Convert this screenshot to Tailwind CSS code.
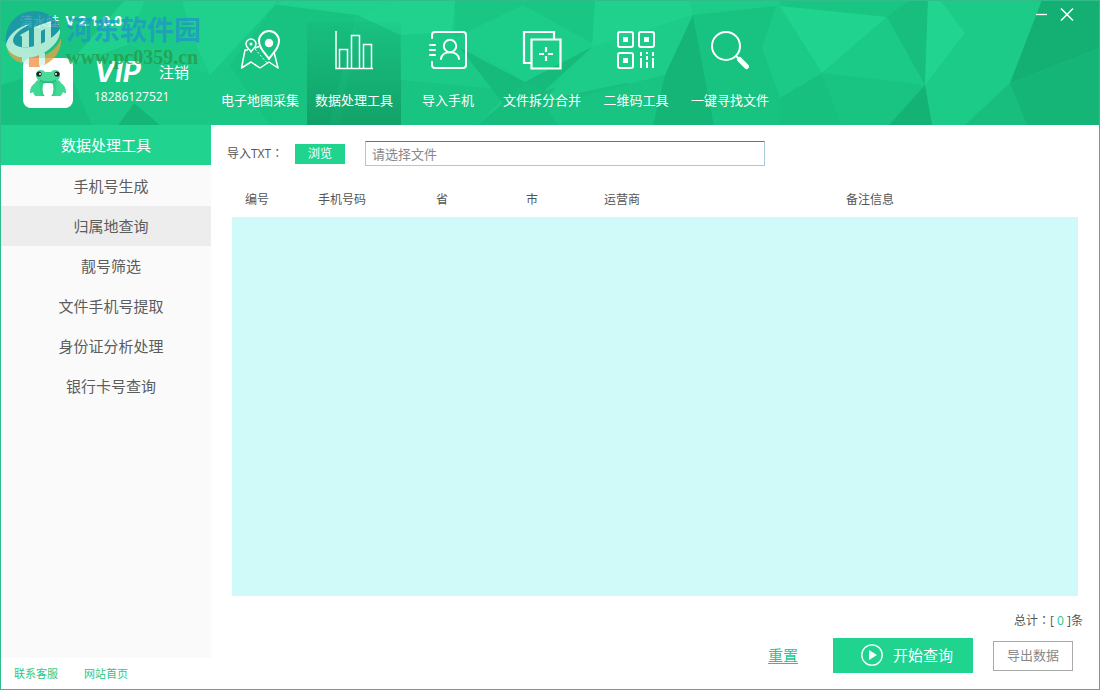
<!DOCTYPE html>
<html lang="zh-CN">
<head>
<meta charset="utf-8">
<meta name="viewport" content="width=device-width, initial-scale=1">
<title>清水蛙 V 2.1.0.0</title>
<script src="https://cdn.jsdelivr.net/npm/@tailwindcss/browser@4"></script>
</head>
<body class="bg-white font-['Open_Sans','Noto_Sans_CJK_SC',sans-serif] text-xs text-[#555]">
<div class="flex min-h-screen flex-col border border-[#2fbd8c]">

  <header class="relative isolate flex h-31 bg-[#1bcb87] text-white">
    <!-- low-poly backdrop -->
    <svg class="absolute inset-0 -z-10 size-full" viewBox="1 1 1098 124" preserveAspectRatio="none" aria-hidden="true">
      <path fill="#19c482" d="M0 0h125l-58 66L0 40z"/>
      <path fill="#20d18e" d="M125 0h20L128 45 67 66z"/>
      <path fill="#1cca87" d="M145 0h65v55L128 45z"/>
      <path fill="#20d18e" d="M182 0h93v5l-45 60-20 10-18-40z"/>
      <path fill="#18c07f" d="M0 85l67-19 25 59H0z"/>
      <path fill="#15b577" d="M118 125l16-22 26 22z"/>
      <path fill="#1ac785" d="M67 66l61-21 82 30 20 50H160l-26-22-16 22H92z"/>
      <path fill="#18c281" d="M275 5l82 10-28 110H224l6-60z"/>
      <path fill="#1ac785" d="M275 5l-45 60 40 60h-50l-10-50z"/>
      <path fill="#20d18e" d="M275 4l10-4h115l-43 15z"/>
      <path fill="#21d28f" d="M357 15l43-15h55l-3 32-52 3z"/>
      <path fill="#1ac583" d="M357 15l43 20v90h-60z"/>
      <path fill="#1bca87" d="M400 35l52-3 8 16 50 42-32 35h-78z"/>
      <path fill="#19c382" d="M400 80l110 10-32 35h-78z"/>
      <path fill="#1ac684" d="M455 0h140v45L523 5l-68 33z"/>
      <path fill="#1ccd89" d="M455 38l68-33 72 40-70 37z"/>
      <path fill="#16ba7b" d="M460 48l65 34 67-35-47 43-32 17-10-4z"/>
      <path fill="#17bd7d" d="M503 103l22-21 20 8 35 35H478z"/>
      <path fill="#18bf7f" d="M545 90l35 35h73l-30-50z"/>
      <path fill="#1ccc88" d="M592 47l101-32-28 60-120 25z"/>
      <path fill="#20d18e" d="M595 0h94l4 15-101 32z"/>
      <path fill="#19c382" d="M545 106l120-31-12 50h-95z"/>
      <path fill="#15b578" d="M693 15l21 110h-61l12-50z"/>
      <path fill="#18c281" d="M693 15l83-9 46 67-42 25v27h-66z"/>
      <path fill="#1dcc89" d="M689 0h91l-4 6-83 9z"/>
      <path fill="#1bca86" d="M776 6l46 67-42 25-18-50z"/>
      <path fill="#19c583" d="M780 0h130l-23 17L780 6z"/>
      <path fill="#20d38f" d="M780 6l107 11-65 56z"/>
      <path fill="#1bca86" d="M887 17l38 68-103-12z"/>
      <path fill="#17be7e" d="M887 17l23-17h18l-3 85z"/>
      <path fill="#21d490" d="M928 0h12l25 33-40 52z"/>
      <path fill="#18c07f" d="M822 73l-42 25v27h62z"/>
      <path fill="#19c482" d="M822 73l103 12-36 40h-47z"/>
      <path fill="#14b375" d="M925 85l-36 40h43z"/>
      <path fill="#17be7e" d="M1010 83l-45 42h62z"/>
      <path fill="#14b073" d="M1042 0h58v48l-90 35z"/>
      <path fill="#15b577" d="M1010 83l90-35v77h-73z"/>
    </svg>

    <div class="flex w-[212px] shrink-0 flex-col pt-2.5">
      <p class="pl-[19px] text-[13px] leading-5">清水蛙&ensp;<b class="text-sm leading-5">V 2.1.0.0</b></p>
      <div class="mt-[27px] flex pl-[22px]">
        <svg class="size-[50px] shrink-0" viewBox="0 0 50 50" role="img" aria-label="用户头像">
          <rect width="50" height="50" rx="8" fill="#fff"/>
          <path fill="#3fd894" d="M16 22c-2 0-3 1-4 3-3 2-5 5-5 9 0 2 2 1 3 0 1 2 1 4 4 4h7V25zM34 22c2 0 3 1 4 3 3 2 5 5 5 9 0 2-2 1-3 0-1 2-1 4-4 4h-7V25z"/>
          <path fill="#4adb9a" d="M13 17c0-6 7-6 9-3h6c2-3 9-3 9 3 0 5-4 7-8 7h-8c-4 0-8-2-8-7z"/>
          <path fill="#35cf8a" d="M16 23h18l-2 15H18z"/>
          <path fill="#fff" d="M20 27c0-3 10-3 10 0 1 5 0 10-2 11h-6c-2-1-3-6-2-11z"/>
          <path fill="none" stroke="#21a970" d="M17 22c4 3 12 3 16 0"/>
          <circle cx="16" cy="16" r="2.600" fill="#222"/><circle cx="34" cy="16" r="2.600" fill="#222"/>
          <circle cx="17" cy="16" r="1" fill="#fff"/><circle cx="33" cy="16" r="1" fill="#fff"/>
        </svg>
        <div class="pl-[21px]">
          <div class="flex items-center">
            <strong class="w-[65px] font-['Inter','Open_Sans',sans-serif] text-[28px] leading-[29px] font-bold italic">VIP</strong>
            <button type="button" class="text-[15px] leading-[29px]">注销</button>
          </div>
          <p class="text-xs leading-5">18286127521</p>
        </div>
      </div>
    </div>

    <nav class="flex items-end" aria-label="主导航">
      <a href="#map" class="flex h-[103px] w-[94px] flex-col items-center gap-5 pt-2 text-[13px] leading-5 whitespace-nowrap">
        <svg class="size-10 shrink-0" viewBox="0 0 40 40" fill="none" stroke="#fff" stroke-width="1.500" stroke-linejoin="round" aria-hidden="true">
          <path d="M8 20H5L1.500 38l9.500-6 9 6 9-6 9 6-4-16"/>
          <path d="M15 18l4-1.500"/><path d="M15 19l12 14" stroke-width="1" stroke-dasharray="2 2"/>
          <path stroke-width="2" d="M29 29c-3-5-10-10-10-18a10 10 0 0 1 20 0c0 8-7 13-10 18z"/><circle cx="29" cy="13" r="3.500" fill="#fff"/>
          <path d="M11 22c-1-3-5-4-5-8a5 5 0 0 1 10 0c0 4-4 5-5 8z"/><circle cx="11" cy="14" r="1.500" fill="#fff" stroke="none"/>
        </svg>电子地图采集</a>
      <a href="#data" aria-current="page" class="flex h-[103px] w-[94px] flex-col items-center gap-5 bg-linear-to-b from-[#0b8050]/5 to-[#0b8050]/50 pt-2 text-[13px] leading-5 whitespace-nowrap">
        <svg class="size-10 shrink-0" viewBox="0 0 40 40" fill="none" stroke="#fff" stroke-width="1.500" aria-hidden="true">
          <path d="M2 1v37.500h37M5.500 38V19.500h8V38M17.500 38V5.500h8V38M29.500 38V14.500h8V38"/>
        </svg>数据处理工具</a>
      <a href="#import" class="flex h-[103px] w-[94px] flex-col items-center gap-5 pt-2 text-[13px] leading-5 whitespace-nowrap">
        <svg class="size-10 shrink-0" viewBox="0 0 40 40" fill="none" stroke="#fff" stroke-width="2" stroke-linecap="round" aria-hidden="true">
          <path d="M4 8V5c0-2 1-3 3-3h28c2 0 3 1 3 3v30c0 2-1 3-3 3H7c-2 0-3-1-3-3v-3M2 15h5M2 20h5M2 25h5"/>
          <circle cx="22" cy="16" r="6.200"/><path d="M13 29c1-9 17-9 18 0"/>
        </svg>导入手机</a>
      <a href="#split" class="flex h-[103px] w-[94px] flex-col items-center gap-5 pt-2 text-[13px] leading-5 whitespace-nowrap">
        <svg class="size-10 shrink-0" viewBox="0 0 40 40" fill="none" stroke="#fff" stroke-width="2.200" aria-hidden="true">
          <path d="M9 33H2V2h30v7M9.500 9.500h29v29h-29z"/>
          <path d="M24 17v5M24 26v5M17 24h5M26 24h5"/>
        </svg>文件拆分合并</a>
      <a href="#qrcode" class="flex h-[103px] w-[94px] flex-col items-center gap-5 pt-2 text-[13px] leading-5 whitespace-nowrap">
        <svg class="size-10 shrink-0" viewBox="0 0 40 40" fill="none" stroke="#fff" stroke-width="2" aria-hidden="true">
          <rect x="2" y="2" width="15" height="15" rx="2"/><rect x="23" y="2" width="15" height="15" rx="2"/><rect x="2" y="23" width="15" height="15" rx="2"/>
          <path fill="#fff" stroke="none" d="M7 7h5v5H7zM28 7h5v5h-5zM7 28h5v5H7z"/>
          <path d="M25 22v4M25 28v10M31 22v2M31 26v4M31 32v6M37 22v4M37 28v10"/>
        </svg>二维码工具</a>
      <a href="#find" class="flex h-[103px] w-[94px] flex-col items-center gap-5 pt-2 text-[13px] leading-5 whitespace-nowrap">
        <svg class="size-10 shrink-0" viewBox="0 0 40 40" fill="none" stroke="#fff" stroke-width="2" stroke-linecap="round" aria-hidden="true">
          <circle cx="16" cy="16" r="14"/><path d="M26 26l3 3"/><path stroke-width="5" d="M29.500 29.500l7 7"/>
        </svg>一键寻找文件</a>
    </nav>

    <div class="ml-auto flex gap-3 pt-1.5 pr-[25px]">
      <button type="button" aria-label="最小化" class="size-3.5"><svg viewBox="0 0 14 14" stroke="#fff" stroke-width="1.300" aria-hidden="true"><path d="M2 7.500h11"/></svg></button>
      <button type="button" aria-label="关闭" class="size-3.5"><svg viewBox="0 0 14 14" stroke="#fff" stroke-width="1.500" aria-hidden="true"><path d="M1 1.500l12 12M13 1.500l-12 12"/></svg></button>
    </div>

    <!-- site watermark, laid over the header -->
    <div class="pointer-events-none absolute top-2.5 left-1 flex items-start gap-1">
      <svg class="h-[58px] w-[57px] opacity-80" viewBox="0 0 57 58" aria-hidden="true">
        <path fill="#1d8fae" d="M1 32C-1 14 12 0 29 0c13 0 23 7 26 18-3 9-12 19-26 23C17 44 6 40 1 32z"/>
        <path fill="#e0a548" d="M56 27c1 12-6 22-17 27v-9c9-5 15-11 17-18zM2 38c4 4 9 6 15 7v7C9 50 4 45 2 38z"/>
        <path fill="#f0964a" d="M24 45h11v11H24z"/>
        <path fill="#d4f3e9" d="M1 34C3 24 12 16 25 13c-10 5-17 11-17 17 1 7 14 8 25 4C43 30 51 24 55 18c1 10-7 19-18 25-14 7-33 4-36-9z"/>
        <path fill="#d4f3e9" d="M15 24l9-5v17h-7V26zM29 16l17-6v24l-6 3V18l-4 2v18h-7z"/>
        <path fill="#d4f3e9" d="M17 42h7v12l-7-3zM34 42h6v11l-6 2z"/>
      </svg>
      <div class="pt-px whitespace-nowrap">
        <p class="text-[27px] leading-9 font-bold text-[#1f96c6]/75">河东软件园</p>
        <p class="font-['Liberation_Serif',serif] text-xl leading-[18px] font-bold text-[#279a48]/80">www.pc0359.cn</p>
      </div>
    </div>
  </header>

  <div class="flex flex-1">
    <aside class="flex w-[210px] shrink-0 flex-col">
      <h2 class="bg-[#20d48f] text-center text-[15px] leading-10 text-white">数据处理工具</h2>
      <nav class="flex-1 bg-[#fafafa] pt-px text-center text-[15px] leading-10 text-[#5c5c5c]" aria-label="工具">
        <a href="#generate" class="block pl-2.5">手机号生成</a>
        <a href="#location" aria-current="page" class="block bg-[#ededed] pl-2.5">归属地查询</a>
        <a href="#pretty" class="block pl-2.5">靓号筛选</a>
        <a href="#extract" class="block pl-2.5">文件手机号提取</a>
        <a href="#idcard" class="block pl-2.5">身份证分析处理</a>
        <a href="#bank" class="block pl-2.5">银行卡号查询</a>
      </nav>
      <div class="flex h-[31px] gap-[26px] pl-[13px] text-[11px] leading-8 text-[#1fc98a]">
        <a href="#service">联系客服</a>
        <a href="#home">网站首页</a>
      </div>
    </aside>

    <main class="flex min-w-0 flex-1 flex-col pt-4 pb-4">
      <form class="flex items-center pl-4">
        <label for="txt-file" class="w-[68px]">导入TXT<span class="font-['Noto_Sans_CJK_TC',sans-serif]" lang="zh-TW">：</span></label>
        <button type="button" class="h-5 w-[50px] bg-[#20d48f] leading-5 text-white">浏览</button>
        <input id="txt-file" type="text" placeholder="请选择文件" class="ml-5 h-[25px] w-[400px] border border-[#a9cbd8] border-t-[#4c7f8c] px-1.5 text-[13px] outline-none placeholder:text-[#888]">
      </form>

      <section class="mt-4 flex flex-1 flex-col pr-[21px] pl-[21px]" aria-label="查询结果">
        <table class="w-full table-fixed">
          <thead>
            <tr class="h-[35px]">
              <th class="w-[50px] font-normal">编号</th>
              <th class="w-[120px] font-normal">手机号码</th>
              <th class="w-20 font-normal">省</th>
              <th class="w-[100px] font-normal">市</th>
              <th class="w-20 font-normal">运营商</th>
              <th class="font-normal">备注信息</th>
            </tr>
          </thead>
        </table>
        <div class="flex-1 bg-[#d0f9f9]"></div>
      </section>

      <p class="mt-3 pr-4 text-right leading-6">总计<span class="font-['Noto_Sans_CJK_TC',sans-serif]" lang="zh-TW">：</span>[ <span class="text-[#20c98d]">0</span> ]条</p>
      <div class="mt-[5px] flex items-center justify-end pr-[26px]">
        <button type="reset" class="mr-[35px] pb-0.5 text-[15px] text-[#20c98d] underline underline-offset-2">重置</button>
        <button type="button" class="mr-5 flex h-[35px] w-[140px] items-center justify-center gap-2.5 bg-[#20d48f] pb-px pl-2 text-[15px] text-white">
          <svg class="size-[22px]" viewBox="0 0 22 22" aria-hidden="true"><circle cx="11" cy="11" r="10.200" fill="none" stroke="#fff" stroke-width="1.300"/><path fill="#fff" d="M8 6l8 5-8 5z"/></svg>开始查询</button>
        <button type="button" class="h-[30px] w-20 border border-[#aaa] text-[13px] text-[#888]">导出数据</button>
      </div>
    </main>
  </div>
</div>
</body>
</html>
